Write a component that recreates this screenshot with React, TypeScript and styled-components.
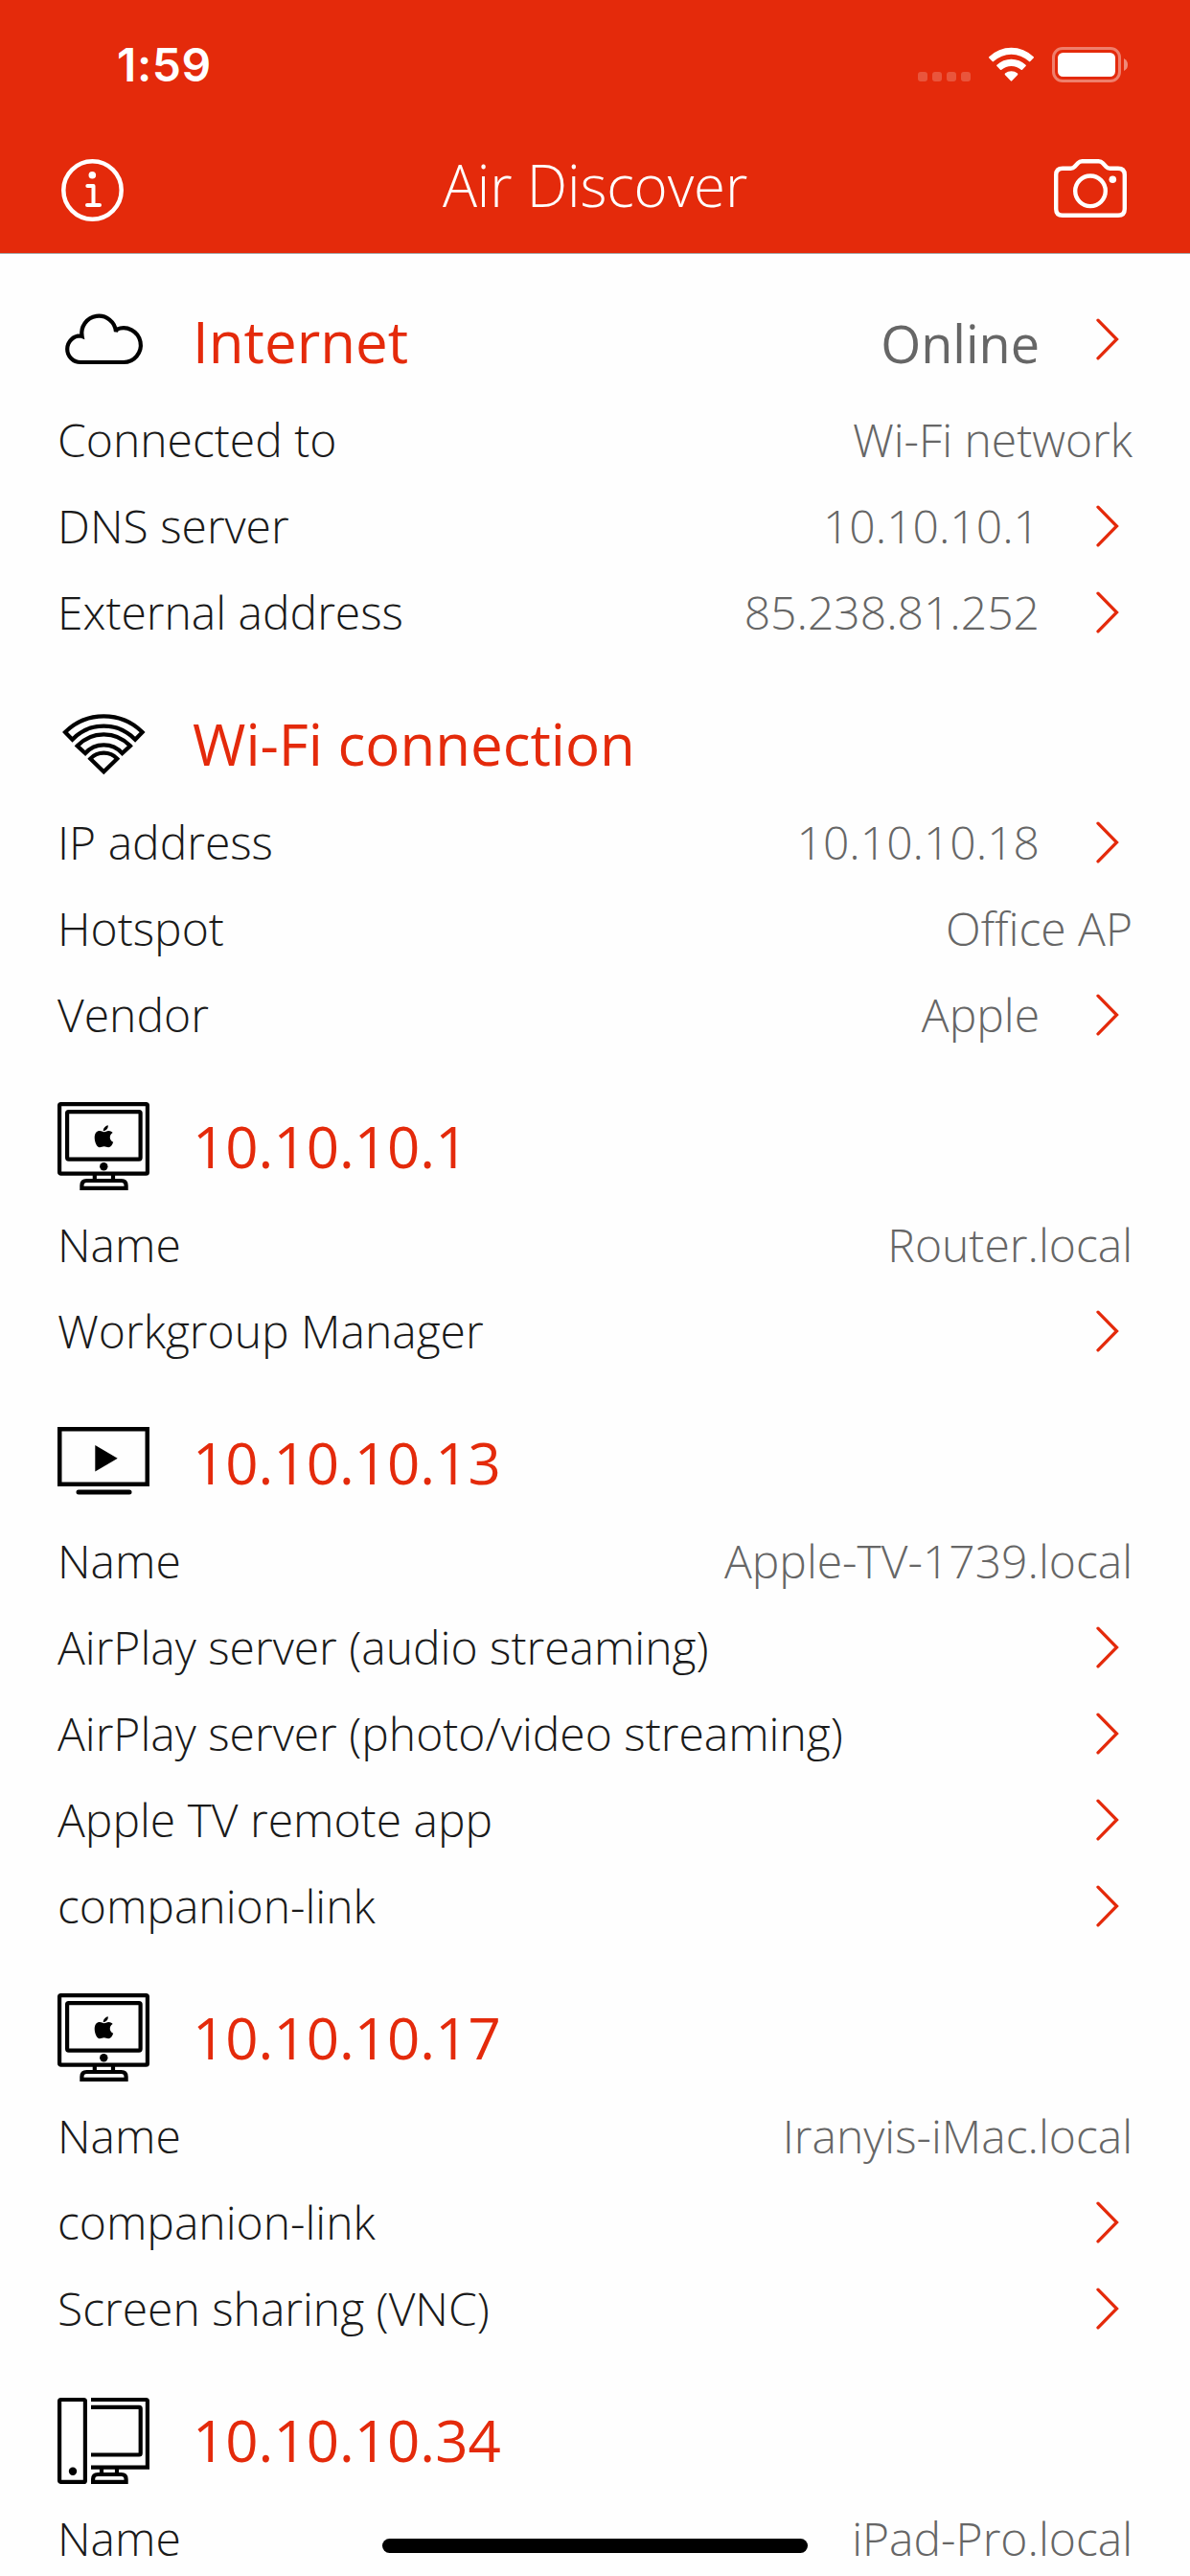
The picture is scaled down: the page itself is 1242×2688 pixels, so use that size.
import React from "react";
import styled, { createGlobalStyle } from "styled-components";

const RED = "#e42a0b";

const GlobalStyle = createGlobalStyle`
  body {
    margin: 0;
    background: #fefefe;
    font-family: "Open Sans", "Noto Sans", sans-serif;
  }
`;

const Screen = styled.div`
  position: relative;
  width: 1242px;
  height: 2688px;
  overflow: hidden;
  background: #fefefe;
`;

const Header = styled.header`
  height: 264px;
  background: ${RED};
  box-shadow: 0 1px 0 #a8a8a8;
  color: #fff;
`;

const StatusBar = styled.div`
  display: flex;
  height: 132px;
  justify-content: space-between;
  align-items: center;
  box-sizing: border-box;
  padding: 4px 65px 0 122px;
`;

const Clock = styled.div`
  font-family: Inter, sans-serif;
  font-weight: 600;
  font-size: 48px;
  line-height: 60px;
  letter-spacing: 0.6px;
`;

const StatusIcons = styled.svg`
  display: block;
  width: 219px;
  height: 44px;
`;

const NavBar = styled.div`
  display: grid;
  grid-template-columns: 130px 1fr 130px;
  align-items: center;
  height: 132px;
  box-sizing: border-box;
  padding: 0 65px 0 63px;
`;

const NavTitle = styled.h1`
  margin: 0;
  font-size: 60px;
  font-weight: 300;
  line-height: 82px;
  letter-spacing: -0.15px;
  text-align: center;
  white-space: nowrap;
  padding: 0 0 10px 2px;
`;

const NavIcon = styled.svg<{ $width: number; $end?: boolean }>`
  display: block;
  width: ${(p) => p.$width}px;
  height: 66px;
  justify-self: ${(p) => (p.$end ? "end" : "start")};
`;

const SectionHead = styled.div`
  display: flex;
  align-items: baseline;
  height: 150px;
  box-sizing: border-box;
  padding: 0 60px;
  line-height: 184px;
`;

const SectionIcon = styled.svg`
  flex: none;
  align-self: flex-start;
  width: 96px;
  height: 150px;
  margin-right: 45px;
`;

const SectionTitle = styled.h2`
  margin: 0;
  font-size: 60px;
  font-weight: 400;
  line-height: inherit;
  color: ${RED};
  flex: 1;
`;

const SectionValue = styled.span`
  font-size: 54px;
  color: #666;
`;

const HeadChevron = styled.div`
  align-self: flex-start;
  line-height: 0;
  padding-top: 68px;
`;

const Row = styled.div`
  display: flex;
  align-items: center;
  height: 90px;
  padding: 0 60px;
  font-size: 48px;
  font-weight: 300;
  white-space: nowrap;
`;

const Label = styled.span`
  flex: 1;
  margin-bottom: 1px;
  color: #1a1a1a;
`;

const Value = styled.span`
  margin-bottom: 1px;
  color: #666;
`;

const ChevronSvg = styled.svg`
  flex: none;
  width: 24px;
  height: 44px;
  margin: 0 14px 0 59px;
`;

const HomeIndicator = styled.div`
  position: absolute;
  left: 399px;
  top: 2649px;
  width: 444px;
  height: 15px;
  border-radius: 8px;
  background: #000;
`;

const Chevron = () => (
  <ChevronSvg viewBox="0 0 24 44" fill="none" stroke={RED} strokeWidth="3.3" strokeLinecap="round">
    <path d="M2 2.200 21.500 22 2 41.800" />
  </ChevronSvg>
);

const CloudIcon = () => (
  <SectionIcon viewBox="0 0 96 150" fill="none" stroke="#000" strokeWidth="4.2">
    <path d="M24 114H68.700A17.900 17.900 0 1 0 62 79.600L61 82A17.900 17.900 0 1 0 25.600 87L24 86.400A13.800 13.800 0 0 0 24 114Z" />
  </SectionIcon>
);

const WifiIcon = () => (
  <SectionIcon viewBox="0 0 96 150" fill="none" stroke="#000" strokeWidth="4.2">
    <path d="M8 80A57 57 0 0 1 88.600 80L81.100 87.700A45.400 45.400 0 0 0 15.500 87.700Z" />
    <path d="M20.700 94.300A37.700 37.700 0 0 1 75.900 94.300L67.600 102A25.800 25.800 0 0 0 29 102Z" />
    <path d="M34.300 107.700A19.300 19.300 0 0 1 62.300 107.700L48.300 121.300Z" />
  </SectionIcon>
);

const ImacIcon = () => (
  <SectionIcon viewBox="0 0 96 150" fill="none" stroke="#000" strokeWidth="4.2">
    <rect x="2.100" y="48.100" width="91.800" height="72.600" rx="1.500" />
    <rect x="10.100" y="56.100" width="76.500" height="49.500" rx="1.500" />
    <circle cx="48.300" cy="113.300" r="4.200" fill="#000" stroke="none" />
    <path d="M38.800 121V128M58 121V128M25.400 135.900V133Q25.400 128 30.400 128H66.600Q71.600 128 71.600 133V135.900Z" />
    <path
      fill="#000"
      stroke="none"
      d="M52.800 70.300C53 73.500 51 76 47.800 76.200C47.600 73.500 49.800 70.800 52.800 70.300ZM48.500 77.200C50 77.200 51.500 75.800 53.500 75.900C55.500 76 57 76.800 57.600 78C53.500 80.500 54 86 58.200 87.800C57 91 55.500 93.200 53.200 93.200C51.500 93.200 50.500 92.300 48.700 92.300C46.800 92.300 45.600 93.200 44 93.200C41 93.200 38.700 87.500 38.700 83C38.700 78.500 41 76 44 76C46 76 47.200 77.200 48.500 77.200Z"
    />
  </SectionIcon>
);

const TvIcon = () => (
  <SectionIcon viewBox="0 0 96 150" fill="none" stroke="#000" strokeWidth="4.500">
    <rect x="2.250" y="57.250" width="91.500" height="57.500" />
    <path d="M39.300 74V101.600L62.700 87.800Z" fill="#000" stroke="none" />
    <path d="M22 123H75" strokeWidth="5" strokeLinecap="round" />
  </SectionIcon>
);

const DesktopIcon = () => (
  <SectionIcon viewBox="0 0 96 150" fill="none" stroke="#000" strokeWidth="4.2">
    <rect x="2.100" y="50" width="26.800" height="85.900" rx="1.500" />
    <circle cx="16" cy="124.800" r="4.200" fill="#000" stroke="none" />
    <path d="M35 50H92.400Q93.900 50 93.900 51.500V120.700H35" />
    <path d="M35 57.800H85.200Q86.700 57.800 86.700 59.300V106Q86.700 107.500 85.200 107.500H35" />
    <path d="M46 121V128M62 121V128M37.100 135.900V133Q37.100 128 42.100 128H66.600Q71.600 128 71.600 133V135.900Z" />
  </SectionIcon>
);

const InfoIcon = () => (
  <NavIcon $width={66} viewBox="0 0 66 66" fill="none" stroke="#fff" strokeWidth="4.500">
    <circle cx="33.500" cy="33.500" r="30.200" />
    <circle cx="33.300" cy="17.700" r="3.800" fill="#fff" stroke="none" />
    <path d="M28.300 29H34.500V49M28 49H41" strokeWidth="4" strokeLinecap="round" strokeLinejoin="round" />
  </NavIcon>
);

const CameraIcon = () => (
  <NavIcon $end $width={77} viewBox="0 0 77 66" fill="none" stroke="#fff" strokeWidth="4.400">
    <path d="M9 10.700H17.500Q20 10.700 21.500 9L25 5.200Q26.800 3.200 29.500 3.200H46.500Q49.200 3.200 51 5.200L54.500 9Q56 10.700 58.500 10.700H67Q73.800 10.700 73.800 17.500V53Q73.800 59.800 67 59.800H9Q2.200 59.800 2.200 53V17.500Q2.200 10.700 9 10.700Z" />
    <circle cx="38" cy="34.300" r="15.800" />
    <circle cx="61.300" cy="22.300" r="3.800" fill="#fff" stroke="none" />
  </NavIcon>
);

const SystemIcons = () => (
  <StatusIcons viewBox="0 0 219 44" fill="#fff">
    <g opacity="0.2">
      <rect x="0" y="29" width="10" height="10" rx="3" />
      <rect x="15" y="29" width="10" height="10" rx="3" />
      <rect x="30" y="29" width="10" height="10" rx="3" />
      <rect x="45" y="29" width="10" height="10" rx="3" />
    </g>
    <path d="M74.300 13.200A33.500 33.500 0 0 1 120.700 13.200Q121.400 13.900 120.700 14.600L117.300 18.100Q116.700 18.700 116 18.100A27 27 0 0 0 79 18.100Q78.300 18.700 77.700 18.100L74.300 14.600Q73.600 13.900 74.300 13.200Z" />
    <path d="M82.400 21.700A22 22 0 0 1 112.600 21.700Q113.300 22.400 112.600 23.100L109 26.800Q108.400 27.400 107.700 26.800A15.500 15.500 0 0 0 87.300 26.800Q86.600 27.400 86 26.800L82.400 23.100Q81.700 22.400 82.400 21.700Z" />
    <path d="M91 30.600A10 10 0 0 1 104 30.600Q104.800 31.400 104 32.200L98.200 38.300Q97.500 39 96.800 38.300L91 32.200Q90.200 31.400 91 30.600Z" />
    <rect x="141.500" y="4.500" width="69" height="34" rx="9.500" fill="none" stroke="#fff" strokeWidth="3" opacity="0.4" />
    <rect x="146" y="9" width="60" height="25" rx="5.500" />
    <path d="M215 15Q219 17 219 21.500Q219 26 215 28Z" opacity="0.45" />
  </StatusIcons>
);

type RowData = { label: string; value?: string; link?: boolean };
type SectionData = { icon: React.ReactNode; title: string; value?: string; rows: RowData[] };

const sections: SectionData[] = [
  {
    icon: <CloudIcon />,
    title: "Internet",
    value: "Online",
    rows: [
      { label: "Connected to", value: "Wi-Fi network" },
      { label: "DNS server", value: "10.10.10.1", link: true },
      { label: "External address", value: "85.238.81.252", link: true },
    ],
  },
  {
    icon: <WifiIcon />,
    title: "Wi-Fi connection",
    rows: [
      { label: "IP address", value: "10.10.10.18", link: true },
      { label: "Hotspot", value: "Office AP" },
      { label: "Vendor", value: "Apple", link: true },
    ],
  },
  {
    icon: <ImacIcon />,
    title: "10.10.10.1",
    rows: [
      { label: "Name", value: "Router.local" },
      { label: "Workgroup Manager", link: true },
    ],
  },
  {
    icon: <TvIcon />,
    title: "10.10.10.13",
    rows: [
      { label: "Name", value: "Apple-TV-1739.local" },
      { label: "AirPlay server (audio streaming)", link: true },
      { label: "AirPlay server (photo/video streaming)", link: true },
      { label: "Apple TV remote app", link: true },
      { label: "companion-link", link: true },
    ],
  },
  {
    icon: <ImacIcon />,
    title: "10.10.10.17",
    rows: [
      { label: "Name", value: "Iranyis-iMac.local" },
      { label: "companion-link", link: true },
      { label: "Screen sharing (VNC)", link: true },
    ],
  },
  {
    icon: <DesktopIcon />,
    title: "10.10.10.34",
    rows: [{ label: "Name", value: "iPad-Pro.local" }],
  },
];

export default function App() {
  return (
    <Screen>
      <GlobalStyle />
      <Header>
        <StatusBar>
          <Clock>1:59</Clock>
          <SystemIcons />
        </StatusBar>
        <NavBar>
          <InfoIcon />
          <NavTitle>Air Discover</NavTitle>
          <CameraIcon />
        </NavBar>
      </Header>
      {sections.map((s) => (
        <section key={s.title}>
          <SectionHead>
            {s.icon}
            <SectionTitle>{s.title}</SectionTitle>
            {s.value && <SectionValue>{s.value}</SectionValue>}
            {s.value && (
              <HeadChevron>
                <Chevron />
              </HeadChevron>
            )}
          </SectionHead>
          {s.rows.map((r) => (
            <Row key={r.label}>
              <Label>{r.label}</Label>
              {r.value && <Value>{r.value}</Value>}
              {r.link && <Chevron />}
            </Row>
          ))}
        </section>
      ))}
      <HomeIndicator />
    </Screen>
  );
}
